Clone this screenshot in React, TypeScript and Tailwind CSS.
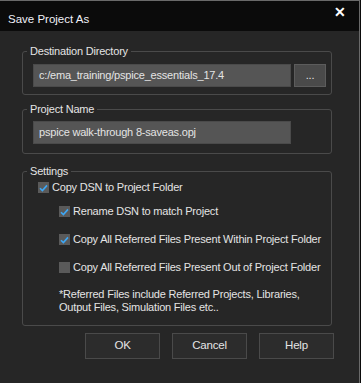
import React from "react";

function Check({ checked }: { checked: boolean }) {
  return (
    <span className="w-[11px] h-[11px] bg-[#5a5a5a] flex items-center justify-center shrink-0">
      {checked && (
        <svg width="9" height="8" viewBox="0 0 9 8">
          <path d="M1 4.2 L3.4 6.6 L8 1.4" fill="none" stroke="#3da7f5" strokeWidth="1.6" />
        </svg>
      )}
    </span>
  );
}

export default function App() {
  const font = { fontFamily: '"Liberation Sans", Arial, sans-serif' };
  return (
    <div className="w-[361px] h-[383px] bg-[#0b0b0b] text-[11px] tracking-[-0.2px] text-[#e4e4e4] whitespace-nowrap" style={font}>
      <div className="w-[360px] h-[383px] flex flex-col border-t border-r border-[#6a6a6a] bg-[#262626]">
        <div className="h-[30px] bg-[#0b0b0b] flex items-center justify-between pl-[8px] pr-[13px] pt-[8px]">
          <span className="text-[11.5px] tracking-[0px] text-[#f0f0f8]">Save Project As</span>
          <span className="text-[14px] text-white font-bold -mt-[16px]">✕</span>
        </div>
        <div className="flex flex-col pl-[22px] pr-[27px] pt-[12px]">
          <fieldset className="border border-[#4a4a4a] rounded-[3px] pl-[10px] pr-[5px] pb-[7px]">
            <legend className="-ml-[6px] px-[3px] leading-[16px]">Destination Directory</legend>
            <div className="flex gap-[3px] mt-[5px]">
              <div className="w-[258px] h-[23px] bg-[#555555] border border-[#4a4a4a] flex items-center pl-[5px]">
                c:/ema_training/pspice_essentials_17.4
              </div>
              <div className="w-[32px] h-[23px] bg-[#4a4a4a] border border-[#5c5c5c] flex items-center justify-center">
                ...
              </div>
            </div>
          </fieldset>
          <fieldset className="border border-[#4a4a4a] rounded-[3px] pl-[10px] pr-[5px] pb-[9px] mt-[6px]">
            <legend className="-ml-[6px] px-[3px] leading-[16px]">Project Name</legend>
            <div className="flex mt-[4px]">
              <div className="w-[258px] h-[23px] bg-[#555555] border border-[#4a4a4a] flex items-center pl-[5px]">
                pspice walk-through 8-saveas.opj
              </div>
            </div>
          </fieldset>
          <fieldset className="border border-[#4a4a4a] rounded-[3px] pl-[15px] pr-[5px] pb-[11px] mt-[9px]">
            <legend className="-ml-[11px] px-[3px] leading-[16px]">Settings</legend>
            <div className="flex flex-col mt-[3px]">
              <div className="flex items-center gap-[3px] h-[11px]">
                <Check checked />
                <span>Copy DSN to Project Folder</span>
              </div>
              <div className="flex flex-col pl-[21px] gap-[17px] mt-[13px]">
                <div className="flex items-center gap-[3px] h-[11px]">
                  <Check checked />
                  <span>Rename DSN to match Project</span>
                </div>
                <div className="flex items-center gap-[3px] h-[11px]">
                  <Check checked />
                  <span>Copy All Referred Files Present Within Project Folder</span>
                </div>
                <div className="flex items-center gap-[3px] h-[11px]">
                  <Check checked={false} />
                  <span>Copy All Referred Files Present Out of Project Folder</span>
                </div>
              </div>
              <div className="pl-[21px] mt-[15px] leading-[13px]">
                <div>*Referred Files include Referred Projects, Libraries,</div>
                <div>Output Files, Simulation Files etc..</div>
              </div>
            </div>
          </fieldset>
          <div className="flex justify-end gap-[12px] mt-[7px] -mr-[2px]">
            {["OK", "Cancel", "Help"].map((b) => (
              <div
                key={b}
                className="w-[75px] h-[26px] bg-[#2c2c2c] border border-[#4a4a4a] flex items-center justify-center text-[11.5px]"
              >
                {b}
              </div>
            ))}
          </div>
        </div>
      </div>
    </div>
  );
}
